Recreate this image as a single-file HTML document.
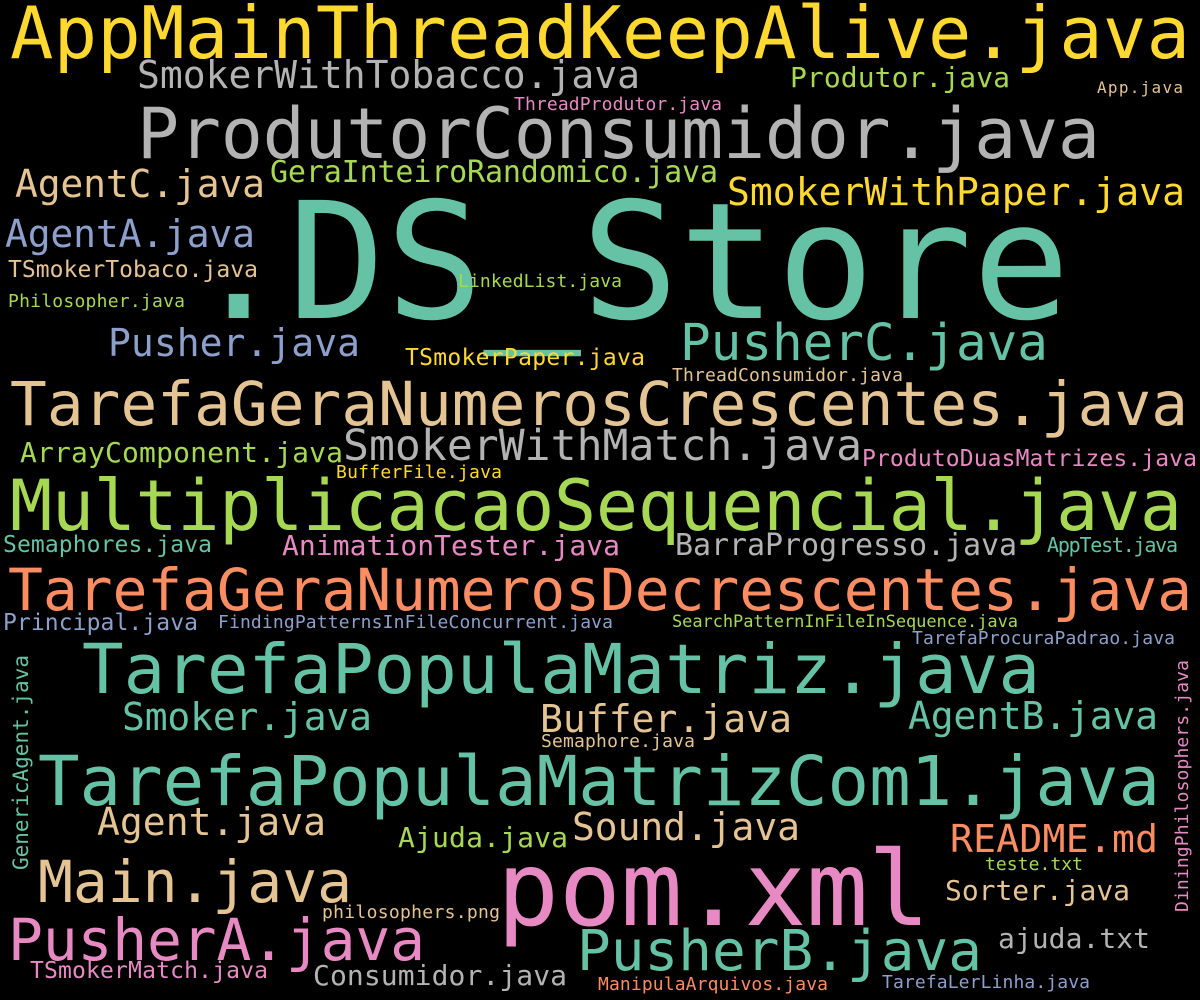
<!DOCTYPE html>
<html><head><meta charset="utf-8"><style>
html,body{margin:0;padding:0;background:#000;}
svg{display:block;}
text{font-family:"DejaVu Sans Mono","Liberation Mono",monospace;}
</style></head><body>
<svg width="1200" height="1000" xmlns="http://www.w3.org/2000/svg">
<rect width="1200" height="1000" fill="#000"/>
<g>
<text x="10" y="58" font-size="72" fill="#ffd92f" textLength="1180">AppMainThreadKeepAlive.java</text>
<text x="137" y="88" font-size="38" fill="#b3b3b3" textLength="503">SmokerWithTobacco.java</text>
<text x="790" y="87" font-size="28" fill="#a6d854" textLength="220">Produtor.java</text>
<text x="1097" y="93" font-size="16" fill="#e5c494" textLength="86">App.java</text>
<text x="514" y="110" font-size="18" fill="#e78ac3" textLength="208">ThreadProdutor.java</text>
<text x="137" y="158" font-size="70" fill="#b3b3b3" textLength="963">ProdutorConsumidor.java</text>
<text x="15" y="197" font-size="38" fill="#e5c494" textLength="250">AgentC.java</text>
<text x="270" y="182" font-size="30" fill="#a6d854" textLength="448">GeraInteiroRandomico.java</text>
<text x="727" y="205" font-size="38" fill="#ffd92f" textLength="458">SmokerWithPaper.java</text>
<text x="190" y="318" font-size="162" fill="#66c2a5" textLength="880">.DS_Store</text>
<text x="5" y="247" font-size="38" fill="#8da0cb" textLength="250">AgentA.java</text>
<text x="8" y="277" font-size="23" fill="#e5c494" textLength="250">TSmokerTobaco.java</text>
<text x="8" y="307" font-size="18" fill="#a6d854" textLength="177">Philosopher.java</text>
<text x="458" y="287" font-size="18" fill="#a6d854" textLength="164">LinkedList.java</text>
<text x="108" y="356" font-size="38" fill="#8da0cb" textLength="252">Pusher.java</text>
<text x="405" y="365" font-size="23" fill="#ffd92f" textLength="240">TSmokerPaper.java</text>
<text x="680" y="360" font-size="51" fill="#66c2a5" textLength="368">PusherC.java</text>
<text x="672" y="381" font-size="18" fill="#e5c494" textLength="231">ThreadConsumidor.java</text>
<text x="10" y="425" font-size="61" fill="#e5c494" textLength="1178">TarefaGeraNumerosCrescentes.java</text>
<text x="343" y="460" font-size="43" fill="#b3b3b3" textLength="519">SmokerWithMatch.java</text>
<text x="20" y="462" font-size="28" fill="#a6d854" textLength="323">ArrayComponent.java</text>
<text x="336" y="478" font-size="18" fill="#ffd92f" textLength="166">BufferFile.java</text>
<text x="862" y="466" font-size="23" fill="#e78ac3" textLength="335">ProdutoDuasMatrizes.java</text>
<text x="10" y="530" font-size="70" fill="#a6d854" textLength="1172">MultiplicacaoSequencial.java</text>
<text x="3" y="552" font-size="23" fill="#66c2a5" textLength="209">Semaphores.java</text>
<text x="282" y="555" font-size="28" fill="#e78ac3" textLength="338">AnimationTester.java</text>
<text x="675" y="555" font-size="30" fill="#b3b3b3" textLength="342">BarraProgresso.java</text>
<text x="1047" y="552" font-size="20" fill="#66c2a5" textLength="131">AppTest.java</text>
<text x="8" y="610" font-size="58" fill="#fc8d62" textLength="1184">TarefaGeraNumerosDecrescentes.java</text>
<text x="3" y="630" font-size="23" fill="#8da0cb" textLength="195">Principal.java</text>
<text x="218" y="628" font-size="18" fill="#8da0cb" textLength="395">FindingPatternsInFileConcurrent.java</text>
<text x="672" y="627" font-size="17" fill="#a6d854" textLength="346">SearchPatternInFileInSequence.java</text>
<text x="912" y="644" font-size="18" fill="#8da0cb" textLength="263">TarefaProcuraPadrao.java</text>
<text x="82" y="693" font-size="69" fill="#66c2a5" textLength="958">TarefaPopulaMatriz.java</text>
<text x="122" y="730" font-size="38" fill="#66c2a5" textLength="250">Smoker.java</text>
<text x="540" y="732" font-size="38" fill="#e5c494" textLength="252">Buffer.java</text>
<text x="908" y="729" font-size="38" fill="#66c2a5" textLength="250">AgentB.java</text>
<text x="541" y="747" font-size="18" fill="#e5c494" textLength="154">Semaphore.java</text>
<text transform="translate(28,870) rotate(-90)" font-size="21" fill="#66c2a5" textLength="215">GenericAgent.java</text>
<text transform="translate(1188,912) rotate(-90)" font-size="18" fill="#e78ac3" textLength="252">DiningPhilosophers.java</text>
<text x="38" y="805" font-size="69" fill="#66c2a5" textLength="1122">TarefaPopulaMatrizCom1.java</text>
<text x="97" y="835" font-size="38" fill="#e5c494" textLength="229">Agent.java</text>
<text x="398" y="847" font-size="28" fill="#a6d854" textLength="170">Ajuda.java</text>
<text x="572" y="840" font-size="38" fill="#e5c494" textLength="228">Sound.java</text>
<text x="950" y="852" font-size="38" fill="#fc8d62" textLength="208">README.md</text>
<text x="985" y="870" font-size="18" fill="#a6d854" textLength="98">teste.txt</text>
<text x="38" y="902" font-size="58" fill="#e5c494" textLength="314">Main.java</text>
<text x="497" y="925" font-size="103" fill="#e78ac3" textLength="433">pom.xml</text>
<text x="945" y="900" font-size="28" fill="#e5c494" textLength="185">Sorter.java</text>
<text x="322" y="918" font-size="18" fill="#e5c494" textLength="178">philosophers.png</text>
<text x="8" y="960" font-size="58" fill="#e78ac3" textLength="417">PusherA.java</text>
<text x="577" y="970" font-size="56" fill="#66c2a5" textLength="405">PusherB.java</text>
<text x="998" y="948" font-size="28" fill="#b3b3b3" textLength="152">ajuda.txt</text>
<text x="30" y="978" font-size="23" fill="#e78ac3" textLength="238">TSmokerMatch.java</text>
<text x="313" y="985" font-size="28" fill="#b3b3b3" textLength="254">Consumidor.java</text>
<text x="598" y="990" font-size="18" fill="#fc8d62" textLength="230">ManipulaArquivos.java</text>
<text x="882" y="988" font-size="18" fill="#8da0cb" textLength="208">TarefaLerLinha.java</text>
</g>
</svg>
</body></html>
